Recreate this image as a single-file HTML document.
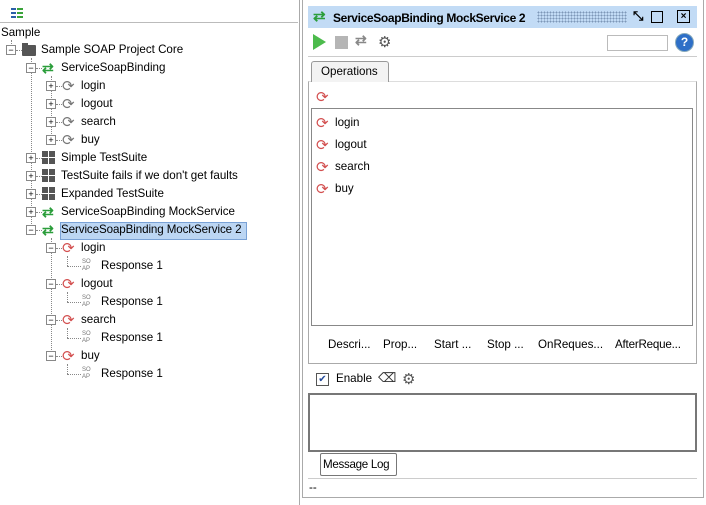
<!DOCTYPE html>
<html><head><style>
body{margin:0;width:706px;height:505px;background:#fff;font-family:"Liberation Sans",sans-serif;font-size:12px;color:#000;position:relative;overflow:hidden}
.a{position:absolute;white-space:nowrap}
.t{position:absolute;white-space:nowrap;font-size:11.6px;line-height:16px}
.box{position:absolute;width:8px;height:8px;border:1px solid #888;background:#fff;font-size:9px;line-height:8px;text-align:center;color:#000}
.hd{position:absolute;border-top:1px dotted #888;height:0}
.vd{position:absolute;border-left:1px dotted #888;width:0}
.sq{position:absolute;width:14px;height:14px}
.sq i{position:absolute;width:6px;height:6px;background:#555}
</style></head><body>
<div class="a" style="left:0;top:0;width:299px;height:505px;border-right:1px solid #aaa;"></div>
<div class="a" style="left:11px;top:8px;width:5px;height:2px;background:#2b5fa8"></div><div class="a" style="left:17px;top:8px;width:6px;height:2px;background:#3aa33a"></div>
<div class="a" style="left:11px;top:12px;width:5px;height:2px;background:#2b5fa8"></div><div class="a" style="left:17px;top:12px;width:6px;height:2px;background:#3aa33a"></div>
<div class="a" style="left:11px;top:16px;width:5px;height:2px;background:#2b5fa8"></div><div class="a" style="left:17px;top:16px;width:6px;height:2px;background:#3aa33a"></div>
<div class="a" style="left:0;top:22px;width:298px;height:1px;background:#bbb"></div>
<div class="t" style="left:1px;top:25px">Sample</div>
<div class="vd" style="left:11px;top:40px;height:10px"></div>
<div class="vd" style="left:31px;top:58px;height:172px"></div>
<div class="vd" style="left:51px;top:76px;height:64px"></div>
<div class="vd" style="left:51px;top:238px;height:118px"></div>
<div class="vd" style="left:67px;top:256px;height:10px"></div>
<div class="vd" style="left:67px;top:292px;height:10px"></div>
<div class="vd" style="left:67px;top:328px;height:10px"></div>
<div class="vd" style="left:67px;top:364px;height:10px"></div>

<div class="box" style="left:6px;top:45px">−</div><div class="hd" style="left:16px;top:50px;width:6px"></div>
<div class="a" style="left:22px;top:43px;width:6px;height:3px;background:#555"></div>
<div class="a" style="left:22px;top:45px;width:14px;height:11px;background:#555;border-radius:1px"></div>
<div class="t" style="left:41px;top:42px">Sample SOAP Project Core</div>

<div class="box" style="left:26px;top:63px">−</div><div class="hd" style="left:36px;top:68px;width:6px"></div>
<div class="a" style="left:42px;top:60px;font-size:14px;color:#2a9d3a;font-weight:bold">⇄</div>
<div class="t" style="left:61px;top:60px">ServiceSoapBinding</div>

<div class="box" style="left:46px;top:81px">+</div><div class="hd" style="left:56px;top:86px;width:6px"></div><div class="a" style="left:62px;top:77px;font-size:15px;color:#777">⟳</div><div class="t" style="left:81px;top:78px">login</div>
<div class="box" style="left:46px;top:99px">+</div><div class="hd" style="left:56px;top:104px;width:6px"></div><div class="a" style="left:62px;top:95px;font-size:15px;color:#777">⟳</div><div class="t" style="left:81px;top:96px">logout</div>
<div class="box" style="left:46px;top:117px">+</div><div class="hd" style="left:56px;top:122px;width:6px"></div><div class="a" style="left:62px;top:113px;font-size:15px;color:#777">⟳</div><div class="t" style="left:81px;top:114px">search</div>
<div class="box" style="left:46px;top:135px">+</div><div class="hd" style="left:56px;top:140px;width:6px"></div><div class="a" style="left:62px;top:131px;font-size:15px;color:#777">⟳</div><div class="t" style="left:81px;top:132px">buy</div>

<div class="box" style="left:26px;top:153px">+</div><div class="hd" style="left:36px;top:158px;width:6px"></div><div class="sq" style="left:42px;top:151px"><i style="left:0;top:0"></i><i style="left:7px;top:0"></i><i style="left:0;top:7px"></i><i style="left:7px;top:7px"></i></div><div class="t" style="left:61px;top:150px">Simple TestSuite</div>
<div class="box" style="left:26px;top:171px">+</div><div class="hd" style="left:36px;top:176px;width:6px"></div><div class="sq" style="left:42px;top:169px"><i style="left:0;top:0"></i><i style="left:7px;top:0"></i><i style="left:0;top:7px"></i><i style="left:7px;top:7px"></i></div><div class="t" style="left:61px;top:168px">TestSuite fails if we don't get faults</div>
<div class="box" style="left:26px;top:189px">+</div><div class="hd" style="left:36px;top:194px;width:6px"></div><div class="sq" style="left:42px;top:187px"><i style="left:0;top:0"></i><i style="left:7px;top:0"></i><i style="left:0;top:7px"></i><i style="left:7px;top:7px"></i></div><div class="t" style="left:61px;top:186px">Expanded TestSuite</div>
<div class="box" style="left:26px;top:207px">+</div><div class="hd" style="left:36px;top:212px;width:6px"></div><div class="a" style="left:42px;top:204px;font-size:14px;color:#2a9d3a;font-weight:bold">⇄</div><div class="t" style="left:61px;top:204px">ServiceSoapBinding MockService</div>
<div class="box" style="left:26px;top:225px">−</div><div class="hd" style="left:36px;top:230px;width:6px"></div><div class="a" style="left:42px;top:222px;font-size:14px;color:#2a9d3a;font-weight:bold">⇄</div>
<div class="a" style="left:60px;top:222px;width:185px;height:16px;background:#bcd6f3;border:1px solid #7aa2d6"></div>
<div class="t" style="left:61px;top:222px;letter-spacing:-0.1px">ServiceSoapBinding MockService 2</div>

<div class="box" style="left:46px;top:243px">−</div><div class="hd" style="left:56px;top:248px;width:6px"></div><div class="a" style="left:62px;top:239px;font-size:15px;color:#d35050">⟳</div><div class="t" style="left:81px;top:240px">login</div>
<div class="hd" style="left:67px;top:266px;width:14px"></div><div class="a" style="left:82px;top:259px;font-size:6px;line-height:7px;color:#777">SO<br>AP</div><div class="t" style="left:101px;top:258px">Response 1</div>
<div class="box" style="left:46px;top:279px">−</div><div class="hd" style="left:56px;top:284px;width:6px"></div><div class="a" style="left:62px;top:275px;font-size:15px;color:#d35050">⟳</div><div class="t" style="left:81px;top:276px">logout</div>
<div class="hd" style="left:67px;top:302px;width:14px"></div><div class="a" style="left:82px;top:295px;font-size:6px;line-height:7px;color:#777">SO<br>AP</div><div class="t" style="left:101px;top:294px">Response 1</div>
<div class="box" style="left:46px;top:315px">−</div><div class="hd" style="left:56px;top:320px;width:6px"></div><div class="a" style="left:62px;top:311px;font-size:15px;color:#d35050">⟳</div><div class="t" style="left:81px;top:312px">search</div>
<div class="hd" style="left:67px;top:338px;width:14px"></div><div class="a" style="left:82px;top:331px;font-size:6px;line-height:7px;color:#777">SO<br>AP</div><div class="t" style="left:101px;top:330px">Response 1</div>
<div class="box" style="left:46px;top:351px">−</div><div class="hd" style="left:56px;top:356px;width:6px"></div><div class="a" style="left:62px;top:347px;font-size:15px;color:#d35050">⟳</div><div class="t" style="left:81px;top:348px">buy</div>
<div class="hd" style="left:67px;top:374px;width:14px"></div><div class="a" style="left:82px;top:367px;font-size:6px;line-height:7px;color:#777">SO<br>AP</div><div class="t" style="left:101px;top:366px">Response 1</div>

<div class="a" style="left:302px;top:0;width:400px;height:497px;border:1px solid #aaa;border-top:none;background:#fff"></div>
<div class="a" style="left:308px;top:6px;width:389px;height:22px;background:#c2dbf5"></div>
<div class="a" style="left:313px;top:7px;font-size:15px;color:#2a9d3a;font-weight:bold">⇄</div>
<div class="t" style="left:333px;top:10px;font-weight:bold;font-size:12px;letter-spacing:-0.35px">ServiceSoapBinding MockService 2</div>
<div class="a" style="left:537px;top:11px;width:90px;height:12px;background-image:radial-gradient(#7d97b8 0.8px,transparent 0.9px);background-size:3px 3px"></div>
<div class="a" style="left:633px;top:9px;font-size:13px;line-height:13px;font-weight:bold">⤡</div>
<div class="a" style="left:651px;top:11px;width:10px;height:10px;border:1px solid #000"></div>
<div class="a" style="left:677px;top:10px;width:11px;height:11px;border:1px solid #000;font-size:10px;line-height:11px;text-align:center;font-weight:bold">×</div>
<div class="a" style="left:313px;top:34px;width:0;height:0;border-left:13px solid #4cbb4c;border-top:8px solid transparent;border-bottom:8px solid transparent"></div>
<div class="a" style="left:335px;top:36px;width:13px;height:13px;background:#b5b5b5"></div>
<div class="a" style="left:355px;top:32px;font-size:14px;color:#888;font-weight:bold">⇄</div>
<div class="a" style="left:378px;top:33px;font-size:15px;color:#555">⚙</div>
<div class="a" style="left:607px;top:35px;width:59px;height:14px;border:1px solid #bbb"></div>
<div class="a" style="left:675px;top:33px;width:17px;height:17px;border-radius:50%;background:#2e6fc7;border:1px solid #8ab;color:#fff;font-weight:bold;font-size:12px;line-height:17px;text-align:center">?</div>
<div class="a" style="left:308px;top:56px;width:389px;height:1px;background:#ccc"></div>
<div class="a" style="left:308px;top:81px;width:387px;height:281px;border:1px solid #aaa;border-top:1px solid #ddd"></div>
<div class="a" style="left:311px;top:61px;width:76px;height:20px;border:1px solid #999;border-bottom:none;background:#f3f3f3;border-radius:3px 3px 0 0"></div>
<div class="t" style="left:321px;top:64px">Operations</div>
<div class="a" style="left:316px;top:88px;font-size:15px;color:#d35050">⟳</div>
<div class="a" style="left:311px;top:108px;width:380px;height:216px;border:1px solid #888"></div>
<div class="a" style="left:316px;top:114px;font-size:15px;color:#d35050">⟳</div><div class="t" style="left:335px;top:115px">login</div>
<div class="a" style="left:316px;top:136px;font-size:15px;color:#d35050">⟳</div><div class="t" style="left:335px;top:137px">logout</div>
<div class="a" style="left:316px;top:158px;font-size:15px;color:#d35050">⟳</div><div class="t" style="left:335px;top:159px">search</div>
<div class="a" style="left:316px;top:180px;font-size:15px;color:#d35050">⟳</div><div class="t" style="left:335px;top:181px">buy</div>
<div class="t" style="left:328px;top:337px">Descri...</div>
<div class="t" style="left:383px;top:337px">Prop...</div>
<div class="t" style="left:434px;top:337px">Start ...</div>
<div class="t" style="left:487px;top:337px">Stop ...</div>
<div class="t" style="left:538px;top:337px">OnReques...</div>
<div class="t" style="left:615px;top:337px;letter-spacing:-0.2px">AfterReque...</div>
<div class="a" style="left:316px;top:373px;width:11px;height:11px;border:1px solid #555;font-size:10px;line-height:11px;text-align:center;color:#234a9a">✔</div>
<div class="t" style="left:336px;top:371px">Enable</div>
<div class="a" style="left:378px;top:370px;font-size:13px;color:#333">⌫</div>
<div class="a" style="left:402px;top:370px;font-size:15px;color:#555">⚙</div>
<div class="a" style="left:308px;top:393px;width:385px;height:55px;border:2px solid #777"></div>
<div class="a" style="left:320px;top:453px;width:75px;height:21px;border:1px solid #777;border-radius:2px"></div>
<div class="t" style="left:323px;top:457px;letter-spacing:-0.3px">Message Log</div>
<div class="a" style="left:308px;top:478px;width:389px;height:1px;background:#ccc"></div>
<div class="t" style="left:309px;top:480px">--</div>
</body></html>
